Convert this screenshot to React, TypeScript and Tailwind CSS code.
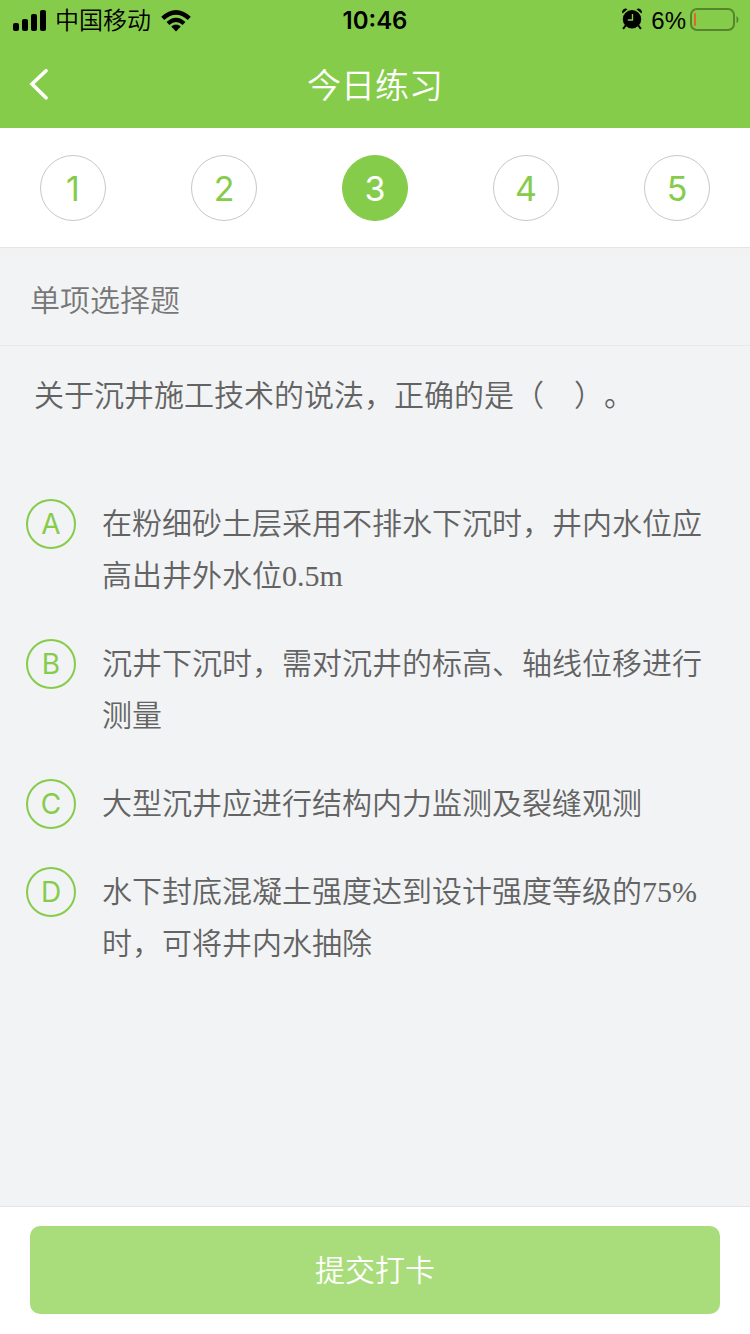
import { useState } from "react";

// Define the type for an answer option
interface Option {
  key: string;
  text: string;
}

const steps = [1, 2, 3, 4, 5];

const options: Option[] = [
  { key: "A", text: "在粉细砂土层采用不排水下沉时，井内水位应高出井外水位0.5m" },
  { key: "B", text: "沉井下沉时，需对沉井的标高、轴线位移进行测量" },
  { key: "C", text: "大型沉井应进行结构内力监测及裂缝观测" },
  { key: "D", text: "水下封底混凝土强度达到设计强度等级的75%时，可将井内水抽除" },
];

function StatusBar() {
  return (
    <div className="grid h-[42px] grid-cols-3 items-center px-[11px] text-2xl text-black">
      <div className="flex items-center gap-2">
        <svg className="mb-0.5" width="36" height="22" viewBox="-1 0 36 22" aria-hidden="true">
          <rect x="1" y="14" width="6" height="8" rx="2" />
          <rect x="10" y="10" width="6" height="12" rx="2" />
          <rect x="19" y="5" width="6" height="17" rx="2" />
          <rect x="28" y="1" width="6" height="21" rx="2" />
        </svg>
        <span className="font-[350]">中国移动</span>
        <svg className="mb-0.5" width="34" height="24" viewBox="0 0 34 24" aria-hidden="true">
          <path d="M2.2 8.8 Q17 -4.8 31.8 8.8 L28.8 11.9 Q17 1.4 5.2 11.9 Z" />
          <path d="M7.5 14 Q17 5.5 26.5 14 L23.6 16.9 Q17 11.2 10.4 16.9 Z" />
          <path d="M12.2 18.6 Q17 14.6 21.8 18.6 L17 23.4 Z" />
        </svg>
      </div>
      <time className="text-center font-semibold">10:46</time>
      <div className="flex items-center justify-end">
        <svg className="mr-2 mb-1" width="22" height="22" viewBox="0 0 22 22" aria-hidden="true">
          <path d="M1.5 5.5 A3.4 3.4 0 0 1 6.5 1.2 Z M20.5 5.5 A3.4 3.4 0 0 0 15.5 1.2 Z" />
          <path d="M4.6 17.5 L2.5 20.3 M17.4 17.5 L19.5 20.3" stroke="black" strokeWidth="2" strokeLinecap="round" />
          <circle cx="11" cy="11.2" r="9.2" />
          <path d="M11.5 6 V12 H6.8" fill="none" stroke="#86cc4b" strokeWidth="1.4" />
        </svg>
        <span className="font-['Liberation_Sans',sans-serif]">6%</span>
        <svg className="mb-0.5 ml-1" width="49" height="24" viewBox="0 0 49 24" aria-hidden="true">
          <rect x="1" y="1" width="43" height="21" rx="6" fill="none" stroke="#55852c" strokeWidth="2" />
          <rect x="4" y="5" width="2" height="13" rx="1" fill="#e8622c" />
          <path d="M46.5 8 Q48.5 9 48.5 11.5 Q48.5 14 46.5 15 Z" fill="#55852c" />
        </svg>
      </div>
    </div>
  );
}

export default function App() {
  const [step, setStep] = useState(3);
  const [answer, setAnswer] = useState("");

  return (
    <div
      lang="zh-CN"
      className="flex min-h-screen flex-col bg-[#f2f3f5] font-['Inter','Noto_Sans_CJK_SC',sans-serif]"
    >
      <header className="bg-[#86cc4b]">
        <StatusBar />
        <div className="grid h-[86px] grid-cols-[1fr_auto_1fr] items-center px-7 text-white">
          <button type="button" aria-label="返回" className="justify-self-start">
            <svg width="22" height="32" viewBox="0 0 22 32" fill="none" aria-hidden="true">
              <path d="M18 1.8 L4 15 L18 28.8" stroke="white" strokeWidth="3.6" strokeLinecap="round" />
            </svg>
          </button>
          <h1 className="text-[34px] font-[350]">今日练习</h1>
        </div>
      </header>

      <nav className="flex justify-between border-b border-[#e4e4e4] bg-white px-10 pt-[27px] pb-[26px]">
        {steps.map(n => (
          <button
            key={n}
            type="button"
            onClick={() => setStep(n)}
            className={
              n === step
                ? "size-[66px] rounded-full border border-[#86cc4b] bg-[#86cc4b] text-[34px] text-white"
                : "size-[66px] rounded-full border border-[#c8c8c8] bg-white text-[34px] text-[#86cc4b]"
            }
          >
            {n}
          </button>
        ))}
      </nav>

      <main className="flex-1">
        <h2
          id="question-type"
          className="border-t-8 border-b border-t-[#f2f2f2] border-b-[#e8e9eb] px-[30px] py-5 text-[30px] leading-[49px] font-[350] text-[#777777]"
        >
          单项选择题
        </h2>

        <fieldset
          aria-labelledby="question-type"
          className="px-[26px] pt-6 font-['Liberation_Serif','Noto_Sans_CJK_SC',serif] text-[30px] leading-[52px] font-[350] text-[#636363]"
        >
          <p className="px-2 [text-spacing-trim:space-all]">关于沉井施工技术的说法，正确的是（　）。</p>
          <div className="mt-[76px] flex flex-col gap-9">
            {options.map(option => (
              <label key={option.key} className="relative flex cursor-pointer gap-[26px]">
                <input
                  type="radio"
                  name="answer"
                  value={option.key}
                  checked={answer === option.key}
                  onChange={() => setAnswer(option.key)}
                  className="peer sr-only"
                />
                <span className="my-px flex size-[50px] shrink-0 items-center justify-center rounded-full border-2 border-[#86cc4b] font-['Inter',sans-serif] text-[28px] font-normal text-[#86cc4b] peer-checked:bg-[#86cc4b] peer-checked:text-white">
                  {option.key}
                </span>
                <span>{option.text}</span>
              </label>
            ))}
          </div>
        </fieldset>
      </main>

      <footer className="border-t border-[#e4e4e4] bg-white px-[30px] pt-[19px] pb-5">
        <button type="button" className="h-22 w-full rounded-[10px] bg-[#a9dc7a] text-[30px] font-[350] text-white">
          提交打卡
        </button>
      </footer>
    </div>
  );
}
